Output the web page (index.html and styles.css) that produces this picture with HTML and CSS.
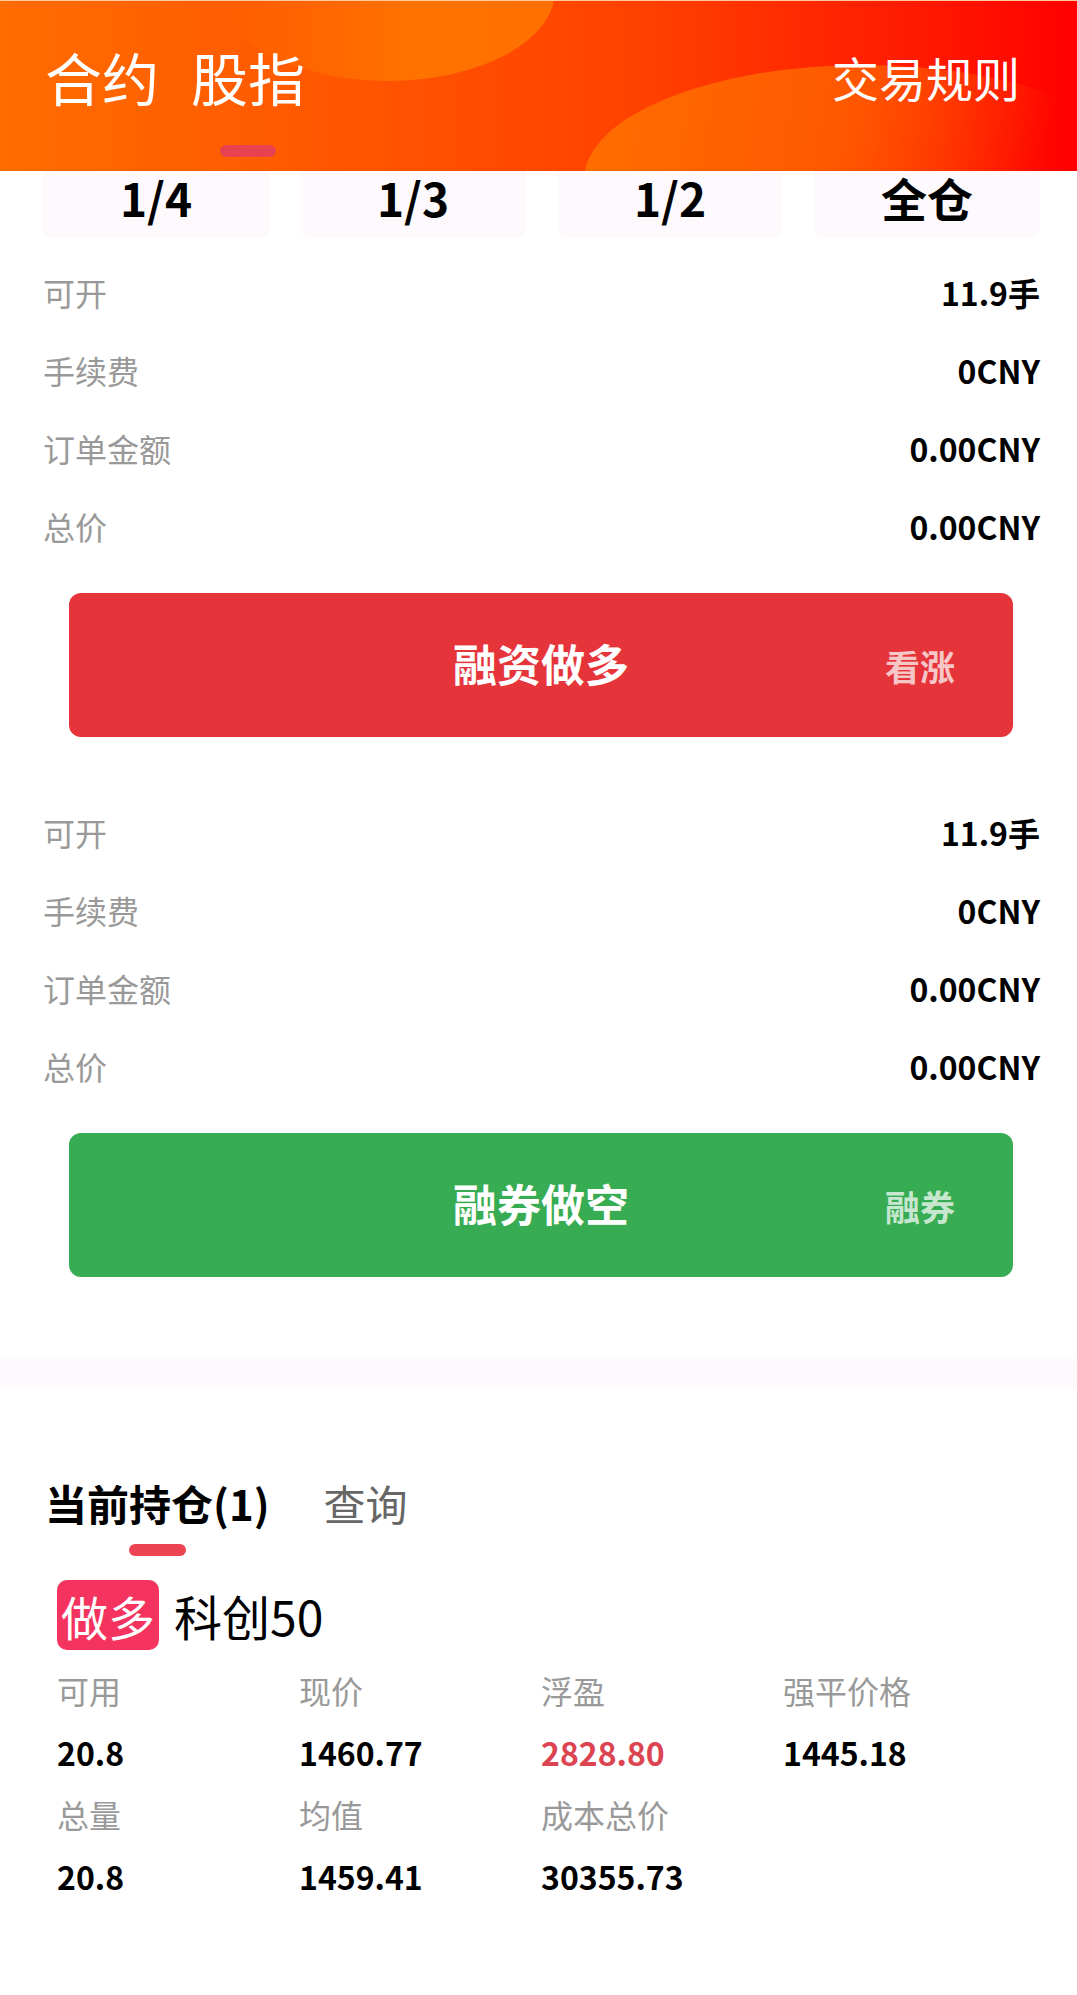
FILE: index.html
```html
<!DOCTYPE html>
<html lang="zh-CN">
<head>
  <meta charset="UTF-8">
  <meta name="viewport" content="width=device-width, initial-scale=1.0">
  <title>股指交易</title>
  <link rel="stylesheet" href="styles.css">
</head>
<body>
  <div id="trade-page">
    <header id="topbar">
      <nav class="top-tabs">
        <div class="top-tab">合约</div>
        <div class="top-tab active">股指</div>
      </nav>
      <a class="rules-link">交易规则</a>
    </header>

    <div class="ratio-bar">
      <div class="ratio">1/4</div>
      <div class="ratio">1/3</div>
      <div class="ratio">1/2</div>
      <div class="ratio">全仓</div>
    </div>

    <section class="order-form">
      <div class="info-row"><span class="info-label">可开</span><span class="info-value">11.9手</span></div>
      <div class="info-row"><span class="info-label">手续费</span><span class="info-value">0CNY</span></div>
      <div class="info-row"><span class="info-label">订单金额</span><span class="info-value">0.00CNY</span></div>
      <div class="info-row"><span class="info-label">总价</span><span class="info-value">0.00CNY</span></div>
      <button class="trade-btn btn-long">
        <span class="btn-main">融资做多</span>
        <span class="btn-side">看涨</span>
      </button>
    </section>

    <section class="order-form second">
      <div class="info-row"><span class="info-label">可开</span><span class="info-value">11.9手</span></div>
      <div class="info-row"><span class="info-label">手续费</span><span class="info-value">0CNY</span></div>
      <div class="info-row"><span class="info-label">订单金额</span><span class="info-value">0.00CNY</span></div>
      <div class="info-row"><span class="info-label">总价</span><span class="info-value">0.00CNY</span></div>
      <button class="trade-btn btn-short">
        <span class="btn-main">融券做空</span>
        <span class="btn-side">融券</span>
      </button>
    </section>

    <div class="divider"></div>

    <section class="positions">
      <div class="pos-tabs">
        <div class="pos-tab active">当前持仓(1)</div>
        <div class="pos-tab">查询</div>
      </div>

      <div class="pos-card">
        <div class="pos-title">
          <span class="side-badge">做多</span>
          <span class="pos-name">科创50</span>
        </div>
        <div class="pos-grid">
          <div class="cell"><span class="cell-label">可用</span><span class="cell-value">20.8</span></div>
          <div class="cell"><span class="cell-label">现价</span><span class="cell-value">1460.77</span></div>
          <div class="cell"><span class="cell-label">浮盈</span><span class="cell-value profit">2828.80</span></div>
          <div class="cell"><span class="cell-label">强平价格</span><span class="cell-value">1445.18</span></div>
          <div class="cell"><span class="cell-label">总量</span><span class="cell-value">20.8</span></div>
          <div class="cell"><span class="cell-label">均值</span><span class="cell-value">1459.41</span></div>
          <div class="cell"><span class="cell-label">成本总价</span><span class="cell-value">30355.73</span></div>
        </div>
      </div>
    </section>
  </div>
</body>
</html>
```

FILE: styles.css
```css
body {
    margin: 0;
    background-color: #fff;
    font-family: "Noto Sans CJK SC", "Noto Sans", sans-serif;
    color: #000;
}

#trade-page {
    width: 1077px;
}

/* header */
#topbar {
    position: relative;
    overflow: hidden;
    height: 171px;
    display: flex;
    justify-content: space-between;
    align-items: flex-start;
    padding: 0 57px 0 45px;
    box-sizing: border-box;
    background: linear-gradient(90deg, #ff6c00 0%, #ff5400 35%, #ff4000 60%, #ff1a00 85%, #ff0000 100%);
    border-top: 1px solid #ffc9a0;
}

#topbar::before {
    content: "";
    position: absolute;
    left: 220px;
    top: -100px;
    width: 335px;
    height: 180px;
    border-radius: 50%;
    background: linear-gradient(90deg, rgba(255, 114, 0, 0) 0%, #ff7200 55%, #ff7000 100%);
}

#topbar::after {
    content: "";
    position: absolute;
    left: 584px;
    top: 64px;
    width: 560px;
    height: 230px;
    border-radius: 50%;
    background: linear-gradient(100deg, #ff6e00 0%, #ff5800 45%, rgba(255, 40, 0, 0) 80%);
}

.top-tabs {
    position: relative;
    z-index: 1;
    display: flex;
    gap: 32px;
    padding-top: 38px;
}

.top-tab {
    display: flex;
    flex-direction: column;
    align-items: center;
    color: #fff;
    font-size: 57px;
    line-height: 74px;
}

.top-tab.active::after {
    content: "";
    width: 56px;
    height: 12px;
    margin-top: 32px;
    border-radius: 6px;
    background-color: #e8414f;
}

.rules-link {
    position: relative;
    z-index: 1;
    color: #fff;
    font-size: 47px;
    line-height: 74px;
    padding-top: 39px;
    text-decoration: none;
}

/* ratio buttons */
.ratio-bar {
    display: grid;
    grid-template-columns: repeat(4, 1fr);
    gap: 31px;
    padding: 0 37px 0 43px;
}

.ratio {
    height: 67px;
    padding-bottom: 16px;
    box-sizing: border-box;
    display: flex;
    align-items: center;
    justify-content: center;
    background-color: #fdf9fd;
    border-radius: 0 0 10px 10px;
    font-size: 46px;
    font-weight: bold;
}

/* order info */
.order-form {
    padding: 15px 37px 0 43px;
}

.order-form.second {
    padding-top: 56px;
}

.info-row {
    display: flex;
    justify-content: space-between;
    align-items: center;
    height: 78px;
}

.info-label {
    color: #999;
    font-size: 32px;
}

.info-value {
    font-size: 32px;
    font-weight: bold;
}

.trade-btn {
    position: relative;
    display: flex;
    align-items: center;
    justify-content: center;
    width: 944px;
    height: 144px;
    margin: 28px 0 0 26px;
    border: none;
    border-radius: 12px;
    font-family: inherit;
    color: #fff;
}

.btn-long {
    background-color: #e5353b;
}

.btn-short {
    background-color: #37ac53;
}

.btn-main {
    font-size: 44px;
    font-weight: bold;
    margin-top: -4px;
}

.btn-side {
    position: absolute;
    right: 58px;
    top: 50%;
    transform: translateY(-50%);
    font-size: 35px;
    font-weight: bold;
    color: rgba(255, 255, 255, 0.72);
}

.divider {
    height: 29px;
    margin-top: 82px;
    background-color: #fdf9fd;
}

/* positions */
.positions {
    padding: 0 37px 0 45px;
}

.pos-tabs {
    display: flex;
    gap: 54px;
    padding-top: 90px;
}

.pos-tab {
    display: flex;
    flex-direction: column;
    align-items: center;
    font-size: 42px;
    line-height: 50px;
    color: #666;
}

.pos-tab.active {
    color: #000;
    font-weight: bold;
}

.pos-tab.active::after {
    content: "";
    width: 57px;
    height: 12px;
    margin-top: 16px;
    border-radius: 6px;
    background-color: #ec4452;
}

.pos-card {
    padding: 24px 0 0 12px;
}

.pos-title {
    display: flex;
    align-items: center;
    gap: 15px;
}

.side-badge {
    width: 102px;
    height: 70px;
    display: flex;
    align-items: center;
    justify-content: center;
    border-radius: 10px;
    background-color: #f5335f;
    color: #fff;
    font-size: 47px;
    line-height: 1;
}

.pos-name {
    font-size: 48px;
}

.pos-grid {
    display: grid;
    grid-template-columns: repeat(4, 242px);
    margin-top: 9px;
}

.cell {
    display: flex;
    flex-direction: column;
}

.cell-label {
    color: #999;
    font-size: 32px;
    line-height: 62px;
}

.cell-value {
    font-size: 32px;
    font-weight: bold;
    line-height: 62px;
}

.cell-value.profit {
    color: #dc4452;
}
```
